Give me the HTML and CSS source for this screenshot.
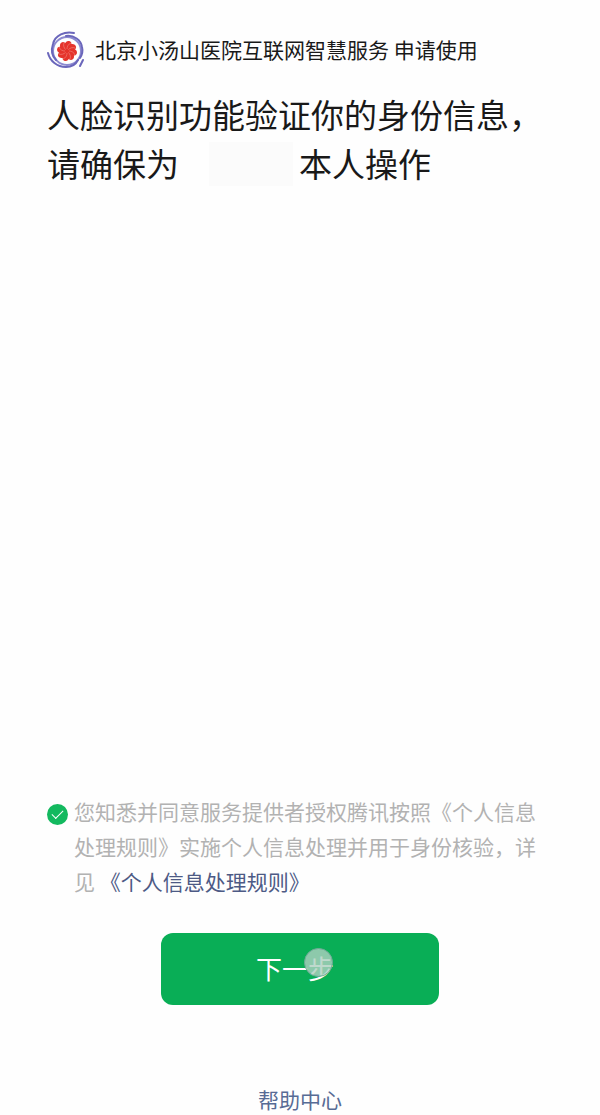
FILE: index.html
```html
<!DOCTYPE html>
<html lang="zh-CN">

<head>
    <meta charset="UTF-8">
    <meta name="viewport" content="width=device-width, initial-scale=1.0">
    <title>人脸识别验证</title>
    <link rel="stylesheet" href="styles.css">
</head>

<body>
    <div class="page">
        <header class="app">
            <svg class="logo" viewBox="0 0 38 38" aria-hidden="true">
                <g fill="none" stroke="#6a66bb" stroke-width="2" stroke-linecap="round">
                    <circle cx="20" cy="21" r="14" stroke="#8d8ad0" />
                    <path d="M27 3C18 1 8 5 6 14C4 20 5 26 9 30" />
                    <path d="M1 23C3 31 10 37 19 37C25 37 29 34 31 30" />
                    <path d="M19 6C27 5 34 10 35 17C36 21 35 25 33 28" />
                    <path d="M36 30L33 36" />
                </g>
                <g fill="#e5342c">
                    <circle cx="20" cy="21" r="8" />
                    <path id="petal" d="M20 21C16 17 17 12 21 11C24 11 25 13 24 15Z" />
                    <use href="#petal" transform="rotate(45 20 21)" />
                    <use href="#petal" transform="rotate(90 20 21)" />
                    <use href="#petal" transform="rotate(135 20 21)" />
                    <use href="#petal" transform="rotate(180 20 21)" />
                    <use href="#petal" transform="rotate(225 20 21)" />
                    <use href="#petal" transform="rotate(270 20 21)" />
                    <use href="#petal" transform="rotate(315 20 21)" />
                </g>
                <g fill="none" stroke="#f08a80" stroke-width="0.6">
                    <path id="vein" d="M20 19C20 17 21 14 24 13" />
                    <use href="#vein" transform="rotate(45 20 21)" />
                    <use href="#vein" transform="rotate(90 20 21)" />
                    <use href="#vein" transform="rotate(135 20 21)" />
                    <use href="#vein" transform="rotate(180 20 21)" />
                    <use href="#vein" transform="rotate(225 20 21)" />
                    <use href="#vein" transform="rotate(270 20 21)" />
                    <use href="#vein" transform="rotate(315 20 21)" />
                </g>
            </svg>
            <span>北京小汤山医院互联网智慧服务 申请使用</span>
        </header>

        <h1 class="title">人脸识别功能验证你的身份信息&#65292;<br>请确保为<span class="name"></span>本人操作</h1>

        <div class="bottom">
            <div class="agreement">
                <input class="check" type="checkbox" id="agree" checked>
                <div class="terms">
                    <label for="agree">您知悉并同意服务提供者授权腾讯按照《个人信息处理规则》实施个人信息处理并用于身份核验&#65292;详见</label>
                    <a href="#">《个人信息处理规则》</a>
                </div>
            </div>
            <button class="next" type="button">下一步<span class="touch"></span></button>
            <a class="help" href="#">帮助中心</a>
        </div>
    </div>
</body>

</html>
```
FILE: styles.css
```css
* {
    box-sizing: border-box;
}

body {
    margin: 0;
    background-color: #fefefe;
    color: #191919;
    font-family: "Noto Sans CJK SC", sans-serif;
}

a {
    color: #576b95;
    text-decoration: none;
}

.page {
    display: flex;
    flex-direction: column;
    min-height: 100vh;
    padding: 30px 47px 0;
}

.app {
    display: flex;
    align-items: center;
    gap: 10px;
    font-size: 21px;
    line-height: 38px;
}

.logo {
    width: 38px;
    height: 38px;
}

.title {
    margin: 22px 0 0;
    font-size: 33px;
    font-weight: 400;
    line-height: 49px;
}

/* blanked out user name */
.name {
    display: inline-block;
    width: 84px;
    height: 44px;
    margin: 0 6px 2px 30px;
    background-color: #fbfbfb;
    vertical-align: bottom;
}

.bottom {
    display: flex;
    flex-direction: column;
    align-items: center;
    margin-top: auto;
}

.agreement {
    display: flex;
    align-items: flex-start;
    gap: 6px;
    width: 100%;
}

.check {
    appearance: none;
    flex: none;
    display: grid;
    place-items: center;
    width: 21px;
    height: 21px;
    margin: 10px 0 0;
    border: 1px solid #b2b2b2;
    border-radius: 50%;
}

.check:checked {
    border: none;
    background-color: #13b95f;
}

.check:checked::before {
    content: "";
    width: 10px;
    height: 5px;
    margin-bottom: 3px;
    border: solid #fff;
    border-width: 0 0 1px 1px;
    transform: rotate(-45deg);
}

.terms {
    color: #b2b2b2;
    font-size: 21px;
    line-height: 35px;
}

.terms a {
    color: #4d5a85;
}

.next {
    position: relative;
    margin-top: 34px;
    padding: 17px 105px 19px 95px;
    border: none;
    border-radius: 12px;
    background-color: #09ae56;
    color: #fff;
    font-family: inherit;
    font-size: 26px;
    line-height: 36px;
}

/* finger mark over the button */
.touch {
    position: absolute;
    top: 15px;
    left: 143px;
    width: 29px;
    height: 29px;
    border: 1px solid #6fa997;
    border-radius: 50%;
    background-color: rgba(175, 208, 192, 0.8);
}

.help {
    margin-top: 78px;
    font-size: 21px;
    line-height: 32px;
}
```
